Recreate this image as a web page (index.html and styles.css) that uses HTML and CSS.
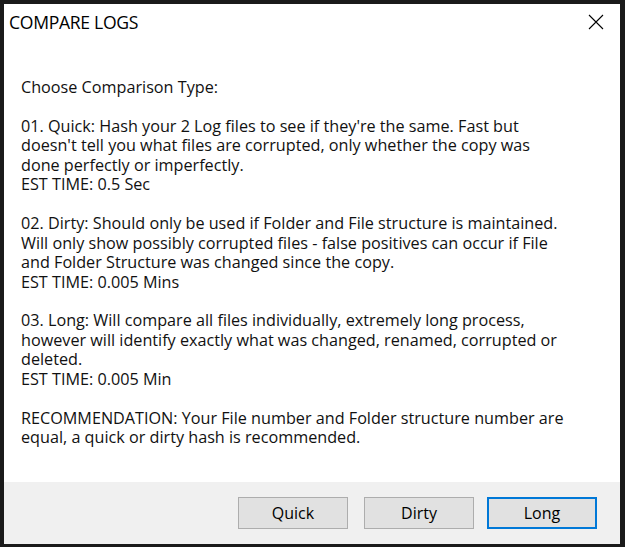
FILE: index.html
```html
<!DOCTYPE html>
<html>
<head>
<meta charset="utf-8">
<link rel="stylesheet" href="styles.css">
</head>
<body>
<div class="window">
  <div class="titlebar">
    <span class="title">COMPARE LOGS</span>
    <svg class="close" width="16" height="16" viewBox="0 0 16 16"><path d="M1 1 L15 15 M15 1 L1 15" stroke="#000" stroke-width="1.1" fill="none"/></svg>
  </div>
  <div class="content">
    <p class="msg">Choose Comparison Type:

01. Quick: Hash your 2 Log files to see if they're the same. Fast but
doesn't tell you what files are corrupted, only whether the copy was
done perfectly or imperfectly.
EST TIME: 0.5 Sec

02. Dirty: Should only be used if Folder and File structure is maintained.
Will only show possibly corrupted files - false positives can occur if File
and Folder Structure was changed since the copy.
EST TIME: 0.005 Mins

03. Long: Will compare all files individually, extremely long process,
however will identify exactly what was changed, renamed, corrupted or
deleted.
EST TIME: 0.005 Min

RECOMMENDATION: Your File number and Folder structure number are
equal, a quick or dirty hash is recommended.</p>
  </div>
  <div class="footer">
    <button class="btn">Quick</button>
    <button class="btn">Dirty</button>
    <button class="btn default">Long</button>
  </div>
</div>
</body>
</html>
```
FILE: styles.css
```css
html, body {
  margin: 0;
  padding: 0;
}
body {
  background: #1a1a1a;
  width: 625px;
  height: 547px;
  padding: 4px 5px 3px 4px;
  box-sizing: border-box;
  font-family: "Open Sans", "Noto Sans", sans-serif;
}
.window {
  width: 616px;
  height: 540px;
  background: #ffffff;
  display: flex;
  flex-direction: column;
}
.titlebar {
  height: 34px;
  display: flex;
  align-items: center;
  justify-content: space-between;
  padding: 0 16px 0 5px;
  flex-shrink: 0;
}
.title {
  font-size: 17.6px;
  color: #000;
  letter-spacing: -0.3px;
  margin-top: 2px;
}
.close {
  display: block;
  margin-top: 2px;
}
.content {
  flex: 1;
  padding: 40px 6px 0 17px;
}
.msg {
  margin: 0;
  white-space: pre-line;
  font-size: 16.2px;
  line-height: 19.45px;
  color: #111;
}
.footer {
  height: 62px;
  background: #f0f0f0;
  display: flex;
  justify-content: flex-end;
  align-items: flex-start;
  gap: 16px;
  padding: 15px 23px 0 0;
  box-sizing: border-box;
  flex-shrink: 0;
}
.btn {
  width: 110px;
  height: 32px;
  background: #e1e1e1;
  border: 1px solid #adadad;
  font-family: "Open Sans", "Noto Sans", sans-serif;
  font-size: 16px;
  color: #000;
  padding: 0;
  margin: 0;
}
.btn.default {
  border: 2px solid #0078d7;
  margin-left: -3px;
}
```
